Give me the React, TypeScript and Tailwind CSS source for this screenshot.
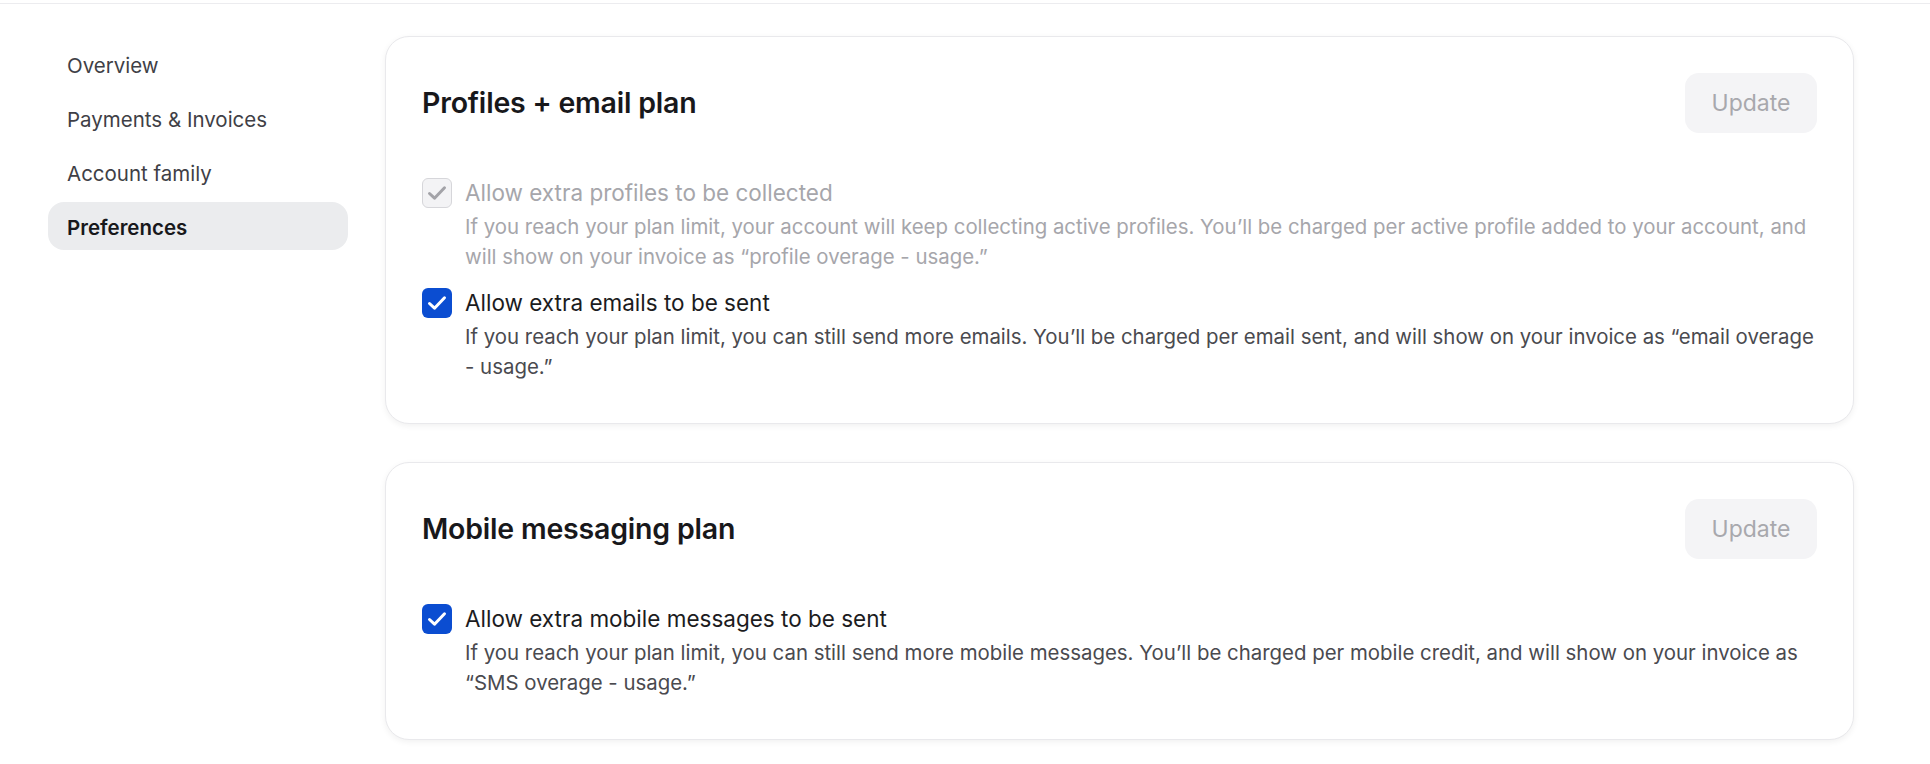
import React from "react";

const font = { fontFamily: "Inter, 'Noto Sans', sans-serif" };

function Check({ disabled }: { disabled?: boolean }) {
  return (
    <div
      className={
        disabled
          ? "w-[30px] h-[30px] shrink-0 rounded-[6px] border border-[#d6d6da] bg-[#f3f3f5] flex items-center justify-center"
          : "w-[30px] h-[30px] shrink-0 rounded-[6px] bg-[#0b4dd1] flex items-center justify-center"
      }
    >
      <svg width="24" height="24" viewBox="0 0 24 24" fill="none">
        <path
          d="M4.5 12.5 L9.5 17.2 L19.5 6.8"
          stroke={disabled ? "#a3a3a8" : "#ffffff"}
          strokeWidth="3"
          strokeLinecap="round"
          strokeLinejoin="round"
        />
      </svg>
    </div>
  );
}

function Option({
  label,
  desc,
  disabled,
}: {
  label: string;
  desc: string;
  disabled?: boolean;
}) {
  return (
    <div className="flex gap-[13px]">
      <Check disabled={disabled} />
      <div className="flex-1">
        <div
          className={
            disabled
              ? "text-[22.5px] leading-[30px] text-[#a6a6ab]"
              : "text-[22.5px] leading-[30px] text-[#1c1c1e]"
          }
        >
          {label}
        </div>
        <div
          className={
            disabled
              ? "mt-[4px] text-[20.4px] leading-[30px] text-[#a6a6ab]"
              : "mt-[4px] text-[20.4px] leading-[30px] text-[#4a4a4f]"
          }
        >
          {desc}
        </div>
      </div>
    </div>
  );
}

function Card({ title, children }: { title: string; children: React.ReactNode }) {
  return (
    <div className="rounded-[24px] border border-[#e9e9ec] bg-white px-[36px] pt-[36px] pb-[41px] shadow-[0_2px_6px_rgba(0,0,0,0.06)]">
      <div className="flex h-[60px] items-center justify-between">
        <h2 className="text-[28.5px] font-semibold text-[#18181b] tracking-[-0.2px]">{title}</h2>
        <button className="h-[60px] w-[132px] rounded-[14px] bg-[#f4f4f6] text-[23px] text-[#a8a8ad]">
          Update
        </button>
      </div>
      <div className="mt-[45px] flex flex-col gap-[16px]">{children}</div>
    </div>
  );
}

export default function App() {
  const nav = ["Overview", "Payments & Invoices", "Account family", "Preferences"];
  return (
    <div className="min-h-screen bg-white" style={font}>
      <div className="h-[4px] border-b border-[#ececef]" />
      <div className="flex">
        <div className="w-[348px] shrink-0 pl-[48px] pt-[36px]">
          <div className="flex flex-col gap-[6px]">
            {nav.map((n) => (
              <div
                key={n}
                className={
                  n === "Preferences"
                    ? "h-[48px] rounded-[16px] bg-[#ebecee] pl-[19px] pt-[4px] flex items-center text-[20.5px] font-semibold text-[#18181b]"
                    : "h-[48px] rounded-[16px] pl-[19px] pt-[4px] flex items-center text-[20.5px] text-[#3f3f46]"
                }
              >
                {n}
              </div>
            ))}
          </div>
        </div>
        <div className="ml-[37px] w-[1469px] pt-[32px] flex flex-col gap-[38px]">
          <Card title="Profiles + email plan">
            <Option
              disabled
              label="Allow extra profiles to be collected"
              desc="If you reach your plan limit, your account will keep collecting active profiles. You’ll be charged per active profile added to your account, and will show on your invoice as “profile overage - usage.”"
            />
            <Option
              label="Allow extra emails to be sent"
              desc="If you reach your plan limit, you can still send more emails. You’ll be charged per email sent, and will show on your invoice as “email overage - usage.”"
            />
          </Card>
          <Card title="Mobile messaging plan">
            <Option
              label="Allow extra mobile messages to be sent"
              desc="If you reach your plan limit, you can still send more mobile messages. You’ll be charged per mobile credit, and will show on your invoice as “SMS overage - usage.”"
            />
          </Card>
        </div>
      </div>
    </div>
  );
}
